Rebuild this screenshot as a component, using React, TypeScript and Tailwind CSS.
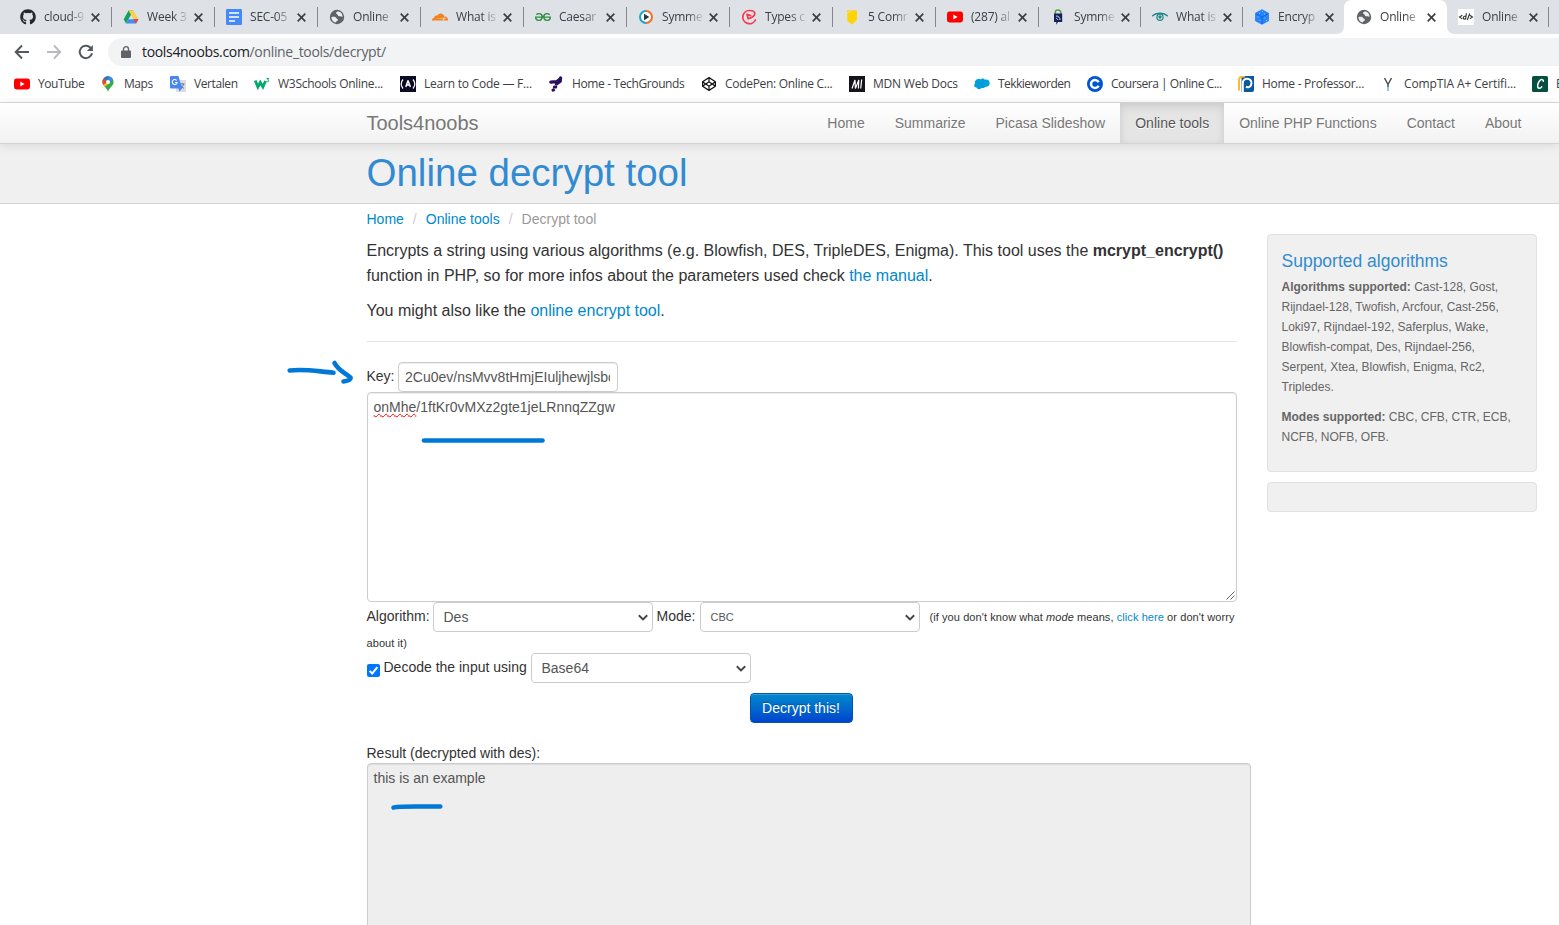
import type { ReactNode } from "react";
import { FaGithub, FaCodepen } from "react-icons/fa";
import { SiCloudflare, SiGeeksforgeeks } from "react-icons/si";

const svg = "block h-4 w-4";

const DriveIcon = () => (
  <svg viewBox="0 0 16 16" className={svg}>
    <path d="M5.6 1.5h4.8L8 5.7 3 14.4.7 10.2z" fill="#12a15f" />
    <path d="M5.6 1.5h4.8l5 8.7h-4.8z" fill="#ffcf48" />
    <path d="M5.4 10.2h10L13 14.4H3z" fill="#4688f4" />
    <path d="M10.6 10.2h4.8L13 14.4z" fill="#ea4335" />
  </svg>
);
const DocsIcon = () => (
  <svg viewBox="0 0 16 16" className={svg}>
    <rect width="16" height="16" rx="1.3" fill="#4688f4" />
    <path d="M3 4h10M3 8h10M3 12h6" stroke="#fff" strokeWidth="1.7" />
  </svg>
);
const GlobeIcon = () => (
  <svg viewBox="0 0 16 16" className={svg}>
    <circle cx="8" cy="8" r="7.2" fill="#5f6368" />
    <path
      d="M2.4 8c1.500-.3 3-.3 4.200.3 1 .5.6 1.400 1.600 1.600 1 .2 1 1.200.2 1.900-.8.7-1.600.7-1.600 1.700C4.200 13.300 2.400 11 2.400 8zM9.800 2.600c-1.600 0-2.800.5-2.800 1.600 0 1 1.800.7 1.800 1.800 0 .9 1.200 1.500 2.200 1.300 1-.2 1.600.2 2.500.8.3-2.600-1.300-4.900-3.700-5.500z"
      fill="#eceef0"
    />
  </svg>
);
const CloudflareIcon = () => <SiCloudflare className="block h-4 w-4 text-[#f58220]" />;
const GeeksIcon = () => <SiGeeksforgeeks className="block h-4 w-4 text-[#2f8d46]" />;
const PlayRingIcon = () => (
  <svg viewBox="0 0 16 16" className={svg}>
    <circle cx="8" cy="8" r="5" fill="#fff" />
    <path d="M8 14A6 6 0 0 1 8 2" fill="none" stroke="#1fa6c4" strokeWidth="2" />
    <path d="M8 2a6 6 0 0 1 0 12" fill="none" stroke="#f36f21" strokeWidth="2" />
    <path d="M6 4.700v6.600L11.300 8z" fill="#233746" />
  </svg>
);
const SwirlIcon = () => (
  <svg viewBox="0 0 16 16" className={svg} fill="none" stroke="#f23a4c" strokeLinejoin="round" strokeLinecap="round">
    <path d="M14.400 11A6.600 6.600 0 1 1 8.500 1.500c3.500 0 5.300 1.300 5.300 3.100 0 2.200-3.200 4.300-6.600 5.200L6 5.400l3.600 1.200" strokeWidth="1.700" />
  </svg>
);
const YellowShieldIcon = () => (
  <svg viewBox="0 0 16 16" className={svg}>
    <path d="M3 1.200 7 .8 3 3.500zM3.300 4.200 8 1.300l5 .3v9.200L8 15.500 3.300 11.800z" fill="#ffd400" />
  </svg>
);
const YoutubeIcon = () => (
  <svg viewBox="0 0 16 16" className={svg}>
    <rect y="2.500" width="16" height="11" rx="2.400" fill="#f00" />
    <path d="M6.300 5.600v4.800L10.600 8z" fill="#fff" />
  </svg>
);
const LockTabIcon = () => (
  <svg viewBox="0 0 16 16" className={svg}>
    <path d="M5.400 5V3C5.400.4 10.800.4 10.800 3V5" fill="none" stroke="#4a9e3f" strokeWidth="1.400" />
    <path d="M4 4.500h8.200V13H8l-1.700 2.800V13H4z" fill="#16235b" />
    <path d="M6 7c2.500 0 4 1.500 4 4M6 9.400c1 0 1.700.7 1.700 1.600" fill="none" stroke="#d8ddea" strokeWidth="1" />
  </svg>
);
const EyeIcon = () => (
  <svg viewBox="0 0 16 16" className={svg} fill="none" stroke="#1f8689">
    <path d="M.3 7.200C4 3.200 12 3.200 15.700 7.200" strokeWidth="1.400" />
    <circle cx="8" cy="8.200" r="3.100" strokeWidth="1.200" />
    <circle cx="8" cy="8" r="1.200" fill="#1f8689" />
  </svg>
);
const CubeIcon = () => (
  <svg viewBox="0 0 16 16" className={svg}>
    <path d="m8 .3 6.900 3.800v7.800L8 15.800 1.100 11.900V4.100z" fill="#2483ff" />
    <path d="M8 8v7M8 8 2 4.800M8 8l6-3.200" stroke="#1763dc" strokeWidth="1" />
    <path d="M5 4.200h1M8 2.600h1M10 5h1M3.500 8h1M5.500 11.500h1M10.500 9h1M12 11.500h1" stroke="#a5ccff" />
  </svg>
);
const CodeTagIcon = () => (
  <svg viewBox="0 0 16 16" className={svg} fill="none" stroke="#333" strokeWidth="1.100">
    <path d="M0 0h16v16H0z" fill="#fff" stroke="none" />
    <path d="M4.300 6.200 1.500 8l2.800 1.900M8.400 4.200 7.600 10.500M8 8c-.6-1.300-2.700-.9-2.700.9 0 1.600 1.900 1.500 2.500.2M11.700 4.500 9.300 11M11.800 6.200 14.500 8l-2.800 1.900" />
  </svg>
);
const MapsIcon = () => (
  <svg viewBox="0 0 16 16" className={svg}>
    <path d="M8 .3a5.600 5.600 0 0 0-5.600 5.600C2.400 10 6.800 11 8 15.800 9.200 11 13.600 10 13.600 5.900A5.600 5.600 0 0 0 8 .3z" fill="#34a853" />
    <path d="M9.700.600A5.600 5.600 0 0 0 3.700 2.300L6.300 4.500z" fill="#1a73e8" />
    <path d="M3.700 2.300C2 4.300 2.100 7 3.300 8.800L6.600 7 6.300 4.500z" fill="#ea4335" />
    <path d="M3.300 8.800c.4.700 1 1.300 1.500 2L9.600 7.200 6.600 6.800z" fill="#fbbc04" />
    <path d="M9.700.600c1.500.5 2.600 1.500 3.200 2.600L9.700 7 8 3.800z" fill="#4285f4" />
    <circle cx="8" cy="5.900" r="2" fill="#fff" />
  </svg>
);
const TranslateIcon = () => (
  <svg viewBox="0 0 16 16" className={svg}>
    <rect x="6" y="4" width="10" height="12" rx="1" fill="#dadce0" />
    <path d="M9.500 8h5M12 7v1m1.700 0c-.5 2-2 3.500-3.700 4.500M10.500 9c.7 1.500 2 2.700 3.500 3.400" stroke="#607d8b" fill="none" />
    <path d="M1 0h7.500L12 12.500 9.500 15.500 8.500 12.500H1a1 1 0 0 1-1-1V1a1 1 0 0 1 1-1z" fill="#4687f4" />
    <path d="M6.700 4.500a2.500 2.500 0 1 0 .5 2H5" fill="none" stroke="#fff" strokeWidth="1.100" />
  </svg>
);
const W3Icon = () => (
  <svg viewBox="0 0 16 16" className={svg} fill="none" stroke="#04aa6d">
    <path d="m1.200 4.500 2.700 6.500L6.300 6.500l2.600 4.500L11.500 5" strokeWidth="2.800" />
    <path d="M12.500 2.500h2.300l-1.200 1.400c1.900 0 1.700 2.400-1.200 1.700" strokeWidth="1" />
  </svg>
);
const FccIcon = () => (
  <svg viewBox="0 0 16 16" className={svg} fill="none" stroke="#fff">
    <path d="M0 0h16v16H0z" fill="#0a0a23" stroke="none" />
    <path d="M3 3.500C.8 6.200.8 9.800 3 12.500M13 3.500c2.200 2.700 2.200 6.300 0 9" strokeWidth="1.200" />
    <path d="M8 4.500 5.800 11M8 4.500l2.400 6.500M7 9h2" strokeWidth="1.500" />
  </svg>
);
const TechGroundsIcon = () => (
  <svg viewBox="0 0 16 16" className={svg} stroke="#2a0f63" strokeLinecap="round" fill="none">
    <path d="m2.800 6.200 6-.5 3.500-3 .3-.7-.3 3.200L8.500 8" strokeWidth="3.200" strokeLinejoin="round" />
    <path d="M6.300 11h1.500M5 14.200l.5-.2" strokeWidth="3" />
  </svg>
);
const CodepenIcon = () => <FaCodepen className="block h-4 w-4 py-px text-[#111]" />;
const MdnIcon = () => (
  <svg viewBox="0 0 16 16" className={svg}>
    <path d="M0 0h16v16H0z" fill="#15141a" />
    <path d="m3 12.500 3-8.500.4 8.500L9.800 4l-.4 8.500M12.700 3.500l-1 9" fill="none" stroke="#fff" strokeWidth="1.200" />
  </svg>
);
const SalesforceIcon = () => (
  <svg viewBox="0 0 16 16" className={svg}>
    <path d="M3.200 3.300c1.500-1 2.700-.6 3.500.2 1-1.300 3.200-1.200 4.100.3 2.200-.9 4.900.5 4.900 3.400 0 2.400-2.200 4-4.500 3.500-.8 1.300-2.300 1.600-3.500 1-1 2-4.300 1.900-5.200-.3C-.2 11.500-.5 8.500 1.200 7.300.7 5.800 1.200 4.100 3.200 3.300z" fill="#009edb" />
  </svg>
);
const CourseraIcon = () => (
  <svg viewBox="0 0 16 16" className={svg}>
    <circle cx="8" cy="8" r="8" fill="#0056d2" />
    <path d="M11.600 6.300A4 4 0 1 0 11.600 9.700" fill="none" stroke="#fff" strokeWidth="2.500" />
  </svg>
);
const ProfessorIcon = () => (
  <svg viewBox="0 0 16 16" className={svg}>
    <path d="M3.500 0H16v14a2 2 0 0 1-2 2H3.500z" fill="#0b5a9d" />
    <path d="M1 14.500V4a3.500 3.500 0 0 1 3.500-3.500H7" fill="none" stroke="#fdbb30" strokeWidth="2" />
    <path d="M4.800 16V7c0-6 8.700-5.500 8.700 0 0 4-3.500 5-5.500 3.600" fill="none" stroke="#fff" strokeWidth="2" />
  </svg>
);
const CompTiaIcon = () => (
  <svg viewBox="0 0 16 16" className={svg} fill="none">
    <path d="M4.500 2 8 8.500 11.500 2M8 8v3" stroke="#4b4f54" strokeWidth="1.500" />
    <path d="M8 11v4" stroke="#57bfd8" strokeWidth="1.500" />
  </svg>
);
const CreatlyIcon = () => (
  <svg viewBox="0 0 16 16" className={svg}>
    <rect width="16" height="16" rx="1.500" fill="#064e40" />
    <path d="M11.200 5.800c.7-2.500-2.300-3-3.800-.8-1.700 2.300-2.600 6.500-.6 7.200 1.300.4 2.500-.7 3.300-1.900" fill="none" stroke="#fff" strokeWidth="1.500" />
  </svg>
);

type TabData = { icon: () => ReactNode; text: string; active?: boolean; noLine?: boolean; narrow?: boolean };
const tabs: TabData[] = [
  { icon: () => <FaGithub className="block h-4 w-4 text-[#24292e]" />, text: "cloud-9", noLine: true },
  { icon: DriveIcon, text: "Week 3" },
  { icon: DocsIcon, text: "SEC-05" },
  { icon: GlobeIcon, text: "Online" },
  { icon: CloudflareIcon, text: "What is" },
  { icon: GeeksIcon, text: "Caesar" },
  { icon: PlayRingIcon, text: "Symme" },
  { icon: SwirlIcon, text: "Types c" },
  { icon: YellowShieldIcon, text: "5 Comr" },
  { icon: YoutubeIcon, text: "(287) al" },
  { icon: LockTabIcon, text: "Symme", narrow: true },
  { icon: EyeIcon, text: "What is", narrow: true },
  { icon: CubeIcon, text: "Encryp", narrow: true },
  { icon: GlobeIcon, text: "Online", active: true, narrow: true },
  { icon: CodeTagIcon, text: "Online", noLine: true, narrow: true },
];

function Tab({ icon: Icon, text, active, noLine, narrow }: TabData) {
  return (
    <div className={`relative flex h-full shrink-0 items-center ${narrow ? "w-[102px]" : "w-[103px]"}`}>
      {active && (
        <svg className="absolute -left-2 top-0 h-[34px] w-[119px]" viewBox="0 0 119 34">
          <path d="M0 34c5 0 8-3 8-8V8c0-5 3-8 8-8h87c5 0 8 3 8 8v18c0 5 3 8 8 8z" fill="#fff" />
        </svg>
      )}
      <span className={`h-5 w-px ${noLine || active ? "" : "bg-[#85888d]"}`} />
      <span className="relative ml-[11px]"><Icon /></span>
      <span className="relative ml-2 w-[41px] overflow-hidden whitespace-nowrap text-[12px] leading-4 tracking-[-0.2px] text-[#3c4043] [mask-image:linear-gradient(to_right,black_62%,transparent_104%)]">
        {text}
      </span>
      <svg viewBox="0 0 9 9" className="relative ml-[6px] h-[9px] w-[9px]" stroke="#3c4043" strokeWidth="1.700">
        <path d="m.7.7 7.600 7.600M8.300.7.7 8.300" />
      </svg>
    </div>
  );
}

const bookmarks: { icon: () => ReactNode; text: string; w: string }[] = [
  { icon: YoutubeIcon, text: "YouTube", w: "w-[86px] tracking-[-0.45px]" },
  { icon: MapsIcon, text: "Maps", w: "w-[70px] tracking-[-0.45px]" },
  { icon: TranslateIcon, text: "Vertalen", w: "w-[84px] tracking-[-0.4px]" },
  { icon: W3Icon, text: "W3Schools Online...", w: "w-[146px] tracking-[-0.28px]" },
  { icon: FccIcon, text: "Learn to Code — F...", w: "w-[148px] tracking-[-0.23px]" },
  { icon: TechGroundsIcon, text: "Home - TechGrounds", w: "w-[153px] tracking-[-0.37px]" },
  { icon: CodepenIcon, text: "CodePen: Online C...", w: "w-[148px] tracking-[-0.3px]" },
  { icon: MdnIcon, text: "MDN Web Docs", w: "w-[125px] tracking-[-0.22px]" },
  { icon: SalesforceIcon, text: "Tekkieworden", w: "w-[113px] tracking-[-0.53px]" },
  { icon: CourseraIcon, text: "Coursera | Online C...", w: "w-[151px] tracking-[-0.46px]" },
  { icon: ProfessorIcon, text: "Home - Professor...", w: "w-[142px] tracking-[-0.27px]" },
  { icon: CompTiaIcon, text: "CompTIA A+ Certifi...", w: "w-[152px] tracking-[-0.12px]" },
  { icon: CreatlyIcon, text: "B", w: "w-[60px]" },
];

function Browser() {
  return (
    <div className="font-['Open_Sans','Noto_Sans',sans-serif]">
      <div className="flex h-[34px] overflow-hidden bg-[#dee1e6] pl-2">
        {tabs.map((t, i) => (
          <Tab key={i} {...t} />
        ))}
        <span className="mt-[7px] h-5 w-px shrink-0 bg-[#85888d]" />
      </div>
      <div className="flex h-[34px] items-center overflow-hidden bg-white pt-[2px]">
        <svg viewBox="0 0 16 16" className="ml-[14px] h-4 w-4 shrink-0" fill="none" stroke="#54585d" strokeWidth="1.900">
          <path d="M15 8H2M8 1.500 1.700 8 8 14.500" />
        </svg>
        <svg viewBox="0 0 16 16" className="ml-4 h-4 w-4 shrink-0" fill="none" stroke="#b9bbbe" strokeWidth="1.900">
          <path d="M1 8h13M8 1.500 14.300 8 8 14.500" />
        </svg>
        <svg viewBox="0 0 16 16" className="ml-4 h-4 w-4 shrink-0" fill="none" stroke="#54585d" strokeWidth="2">
          <path d="M14 9.200A6.200 6.200 0 1 1 12.500 3.700L13.700 5" />
          <path d="M14.900 1v6h-6z" fill="#54585d" stroke="none" />
        </svg>
        <div className="ml-[14px] flex h-7 w-[1500px] shrink-0 items-center rounded-full bg-[#f1f3f4] pl-[13px]">
          <svg viewBox="0 0 10 12" className="h-3 w-[10px]">
            <path d="M1 4.500h8a1 1 0 0 1 1 1V11a1 1 0 0 1-1 1H1a1 1 0 0 1-1-1V5.500a1 1 0 0 1 1-1z" fill="#5f6368" />
            <path d="M2.500 5V3.200a2.500 2.500 0 0 1 5 0V5" fill="none" stroke="#5f6368" strokeWidth="1.300" />
          </svg>
          <span className="ml-[11px] whitespace-nowrap text-[14px] leading-5 tracking-[-0.33px] text-[#5f6368]">
            <span className="text-[#202124]">tools4noobs.com</span>/online_tools/decrypt/
          </span>
        </div>
      </div>
      <div className="flex h-[35px] items-center overflow-hidden border-b border-[#d9dadc] bg-white pb-[2px] pl-[14px]">
        {bookmarks.map(({ icon: Icon, text, w }, i) => (
          <div key={i} className={`flex shrink-0 items-center gap-2 whitespace-nowrap text-[12px] leading-4 text-[#3c4043] ${w}`}>
            <Icon />
            <span>{text}</span>
          </div>
        ))}
      </div>
    </div>
  );
}

function Select({ value, className = "" }: { value: string; className?: string }) {
  return (
    <span className={`relative inline-flex h-[30px] w-[220px] shrink-0 items-center rounded border border-[#ccc] bg-white pl-[10px] text-[#555] ${className}`}>
      {value}
      <svg viewBox="0 0 10 6" className="absolute right-1 top-[11px] h-[7px] w-[10px]" fill="none" stroke="#444" strokeWidth="1.900">
        <path d="m.8.8 4.200 4.100L9.200.8" />
      </svg>
    </span>
  );
}

const nav = ["Home", "Summarize", "Picasa Slideshow", "Online tools", "Online PHP Functions", "Contact", "About"];
const link = "text-[#0088cc]";

export default function App() {
  return (
    <div className="relative h-[925px] w-[1559px] overflow-hidden bg-white font-['Liberation_Sans',Arial,sans-serif] text-[14px] leading-5 text-[#333]">
      <Browser />
      <nav className="relative z-10 h-[41px] border-b border-[#d4d4d4] bg-linear-to-b from-white to-[#f2f2f2] pl-[366.500px] shadow-[0_1px_10px_rgba(0,0,0,0.1)]">
        <div className="flex h-10 w-[1170px] items-center justify-between text-[#777] [text-shadow:0_1px_0_#fff]">
          <span className="text-[20px] tracking-[-0.03px]">Tools4noobs</span>
          <div className="flex h-full">
            {nav.map((n) => (
              <span
                key={n}
                className={`px-[15px] py-[10px] ${n === "Online tools" ? "bg-[#e5e5e5] text-[#555] shadow-[inset_0_3px_8px_rgba(0,0,0,0.125)]" : ""}`}
              >
                {n}
              </span>
            ))}
          </div>
        </div>
      </nav>
      <header className="h-[60px] border-b border-[#d4d4d4] bg-[#f0f0f0] pl-[366.500px] pt-[9px]">
        <h1 className="text-[38.500px] leading-10 text-[#328bd0]">Online decrypt tool</h1>
      </header>
      <div className="flex pl-[366.500px]">
        <main className="w-[870px] shrink-0">
          <div className="flex pt-[5px]">
            <span className={link}>Home</span>
            <span className="px-[9px] text-[#ccc]">/</span>
            <span className={link}>Online tools</span>
            <span className="px-[9px] text-[#ccc]">/</span>
            <span className="text-[#999]">Decrypt tool</span>
          </div>
          <div className="mt-[9px] text-[16px] leading-[25px]">
            <p>
              Encrypts a string using various algorithms (e.g. Blowfish, DES, TripleDES, Enigma). This tool uses the <b>mcrypt_encrypt()</b>
              <br />
              function in PHP, so for more infos about the parameters used check <span className={link}>the manual</span>.
            </p>
            <p className="mt-[10px]">
              You might also like the <span className={link}>online encrypt tool</span>.
            </p>
          </div>
          <div className="mt-[18px] h-px bg-[#e5e5e5]" />
          <div className="mt-5 flex h-[30px]">
            <span className="mt-[4px] w-[31px]">Key:</span>
            <div className="h-[30px] w-[220px] rounded border border-[#ccc] px-[6.500px] pt-[4px] text-[#555] shadow-[inset_0_1px_1px_rgba(0,0,0,0.075)]">
              <div className="overflow-hidden whitespace-nowrap">2Cu0ev/nsMvv8tHmjEIuljhewjlsbdk</div>
            </div>
          </div>
          <div className="relative h-[210px] rounded border border-[#ccc] px-[6px] py-1 text-[#555] shadow-[inset_0_1px_1px_rgba(0,0,0,0.075)]">
            <span className="underline decoration-[#f00] decoration-wavy decoration-1 [text-decoration-skip-ink:none] [text-underline-offset:1px]">onMhe</span>/1ftKr0vMXz2gte1jeLRnnqZZgw
            <svg viewBox="0 0 9 9" className="absolute bottom-px right-px h-[9px] w-[9px]" stroke="#555" strokeWidth=".9">
              <path d="M.5 8.500 8.500.5M4.500 8.500l4-4" />
            </svg>
          </div>
          <div className="flex h-[30px]">
            <span className="mt-[4px] w-[66px]">Algorithm:</span>
            <Select value="Des" />
            <span className="ml-1 mt-[4px] w-[43px]">Mode:</span>
            <Select value="CBC" className="text-[11px]" />
            <span className="ml-[10px] mt-[5px] whitespace-nowrap text-[11px] tracking-[0.08px]">
              (if you don't know what <i>mode</i> means, <span className={link}>click here</span> or don't worry
            </span>
          </div>
          <div className="h-[21px] pt-px text-[11px] tracking-[0.08px]">about it)</div>
          <div className="flex h-[30px]">
            <svg viewBox="0 0 13 13" className="ml-[.5px] mt-[11px] h-[13px] w-[13px]">
              <rect width="13" height="13" rx="2" fill="#0075ff" />
              <path d="m2.600 6.900 2.600 2.600 5.200-6.300" fill="none" stroke="#fff" strokeWidth="2" />
            </svg>
            <span className="ml-[3.500px] mt-[4px] w-[147px]">Decode the input using</span>
            <Select value="Base64" />
          </div>
          <div className="mt-[10px] flex justify-center pr-px">
            <div className="h-[30px] w-[103px] rounded border border-[#0055a8] bg-linear-to-b from-[#0088cc] to-[#0044cc] pt-1 text-center text-white shadow-[inset_0_1px_0_rgba(255,255,255,0.2)] [text-shadow:0_-1px_0_rgba(0,0,0,0.25)]">
              Decrypt this!
            </div>
          </div>
          <div className="mt-5">Result (decrypted with des):</div>
          <div className="h-[200px] w-[884px] rounded border border-[#ccc] bg-[#eee] px-[6px] py-1 text-[#555] shadow-[inset_0_1px_1px_rgba(0,0,0,0.075)]">
            this is an example
          </div>
        </main>
        <aside className="ml-[30px] mt-[30px] w-[270px] text-[12px] text-[#666]">
          <section className="h-[238px] rounded border border-[#e1e1e1] bg-[#f0f0f0] px-[14px] pt-4">
            <h2 className="text-[17.500px] text-[#328bd0]">Supported algorithms</h2>
            <p className="mt-[6px] whitespace-nowrap">
              <b>Algorithms supported:</b> Cast-128, Gost,
              <br />
              Rijndael-128, Twofish, Arcfour, Cast-256,
              <br />
              Loki97, Rijndael-192, Saferplus, Wake,
              <br />
              Blowfish-compat, Des, Rijndael-256,
              <br />
              Serpent, Xtea, Blowfish, Enigma, Rc2,
              <br />
              Tripledes.
            </p>
            <p className="mt-[10px] whitespace-nowrap">
              <b>Modes supported:</b> CBC, CFB, CTR, ECB,
              <br />
              NCFB, NOFB, OFB.
            </p>
          </section>
          <section className="mt-[10px] h-[30px] rounded border border-[#e1e1e1] bg-[#f0f0f0]" />
        </aside>
      </div>
      <svg className="pointer-events-none absolute left-0 top-0 z-20 h-[925px] w-[1559px]" fill="none" stroke="#0078d7" strokeWidth="4.600" strokeLinecap="round" strokeLinejoin="round">
        <path d="M289.700 370.500C305 368.500 318 371.500 333.500 372.700" />
        <path d="M334.500 363C338 370 345 373 350.500 377.500 351 380 347 381 343.500 381.500" />
        <path d="M424 440.500H542.500" />
        <path d="M393.500 807.500C397 806 402 806.500 440.300 806.500" />
      </svg>
    </div>
  );
}
